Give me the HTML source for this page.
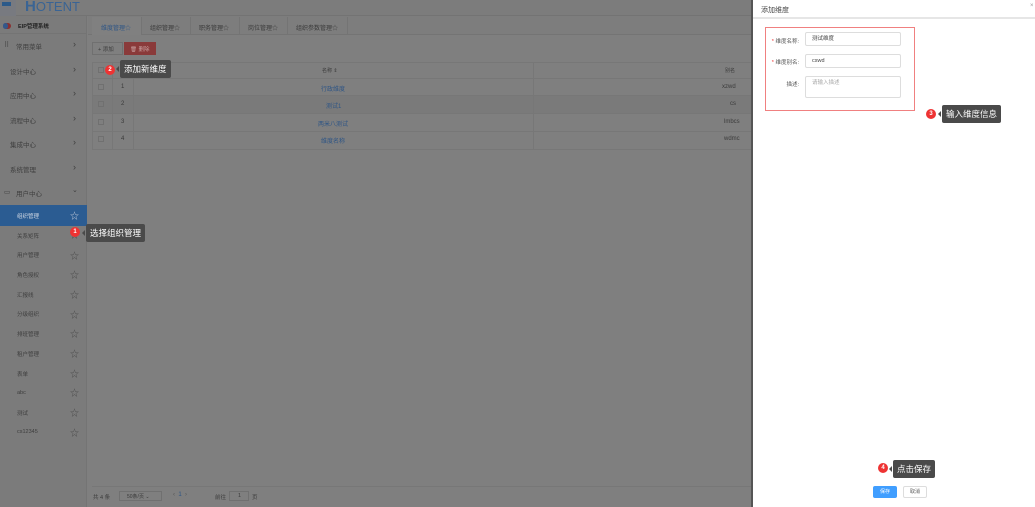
<!DOCTYPE html>
<html><head><meta charset="utf-8"><style>
*{margin:0;padding:0;box-sizing:border-box}
body{width:1035px;height:507px;position:relative;overflow:hidden;background:#7f7f7f;font-family:"Liberation Sans","Noto Sans CJK SC",sans-serif;font-size:6px;color:#3a3a3a}
.a{position:absolute}
.t{position:absolute;white-space:nowrap}
.sb{color:#3e3e3e;font-size:6.5px}
.star{position:absolute;left:70px;font-size:9px;color:#4a4a4a}
.tip{position:absolute;background:#4a4a4a;color:#fff;font-size:8.5px;padding:0 4px;border-radius:2px;line-height:18px;height:18px}
.tip:before{content:"";position:absolute;left:-4px;top:6px;border:3px solid transparent;border-right-color:#4a4a4a;border-left:0}
.bd{position:absolute;width:10px;height:10px;border-radius:50%;background:#e33;color:#fff;font-size:6px;text-align:center;line-height:10px;font-weight:bold}
.inp{position:absolute;left:805px;width:96px;height:14px;border:1px solid #ddd;border-radius:2px;font-size:5.5px;padding-left:6px;line-height:12px;color:#444}
.lbl{position:absolute;font-size:5.5px;color:#555;text-align:right;width:32px;left:767px}
</style></head><body>
<div class="a" style="left:0;top:0;width:752px;height:16px;background:#7c7c7c;border-bottom:1px solid #737373"></div>
<div class="a" style="left:0;top:0;width:16px;height:16px;background:#787a80"></div>
<div class="a" style="left:2px;top:2px;width:9px;height:4px;background:#2c5a8a"></div>
<div class="t" style="left:25px;top:-1px;font-size:13px;color:#3a6494;line-height:16px"><b style="font-size:15px">H</b>OTENT</div>
<div class="a" style="left:0;top:16px;width:87px;height:491px;background:#7b7b7b;border-right:1px solid #747474"></div>
<div class="a" style="left:3px;top:23px;width:8px;height:6px;border-radius:3px;background:#8a3030"></div>
<div class="a" style="left:3px;top:23px;width:5px;height:6px;border-radius:3px;background:#34588a"></div>
<div class="t" style="left:18px;top:22px;font-size:5.5px;font-weight:bold;color:#222">EIP管理系统</div>
<div class="a" style="left:0;top:33px;width:87px;border-top:1px solid #747474"></div>
<div class="t sb" style="left:4px;top:41px;font-size:7px">⠿</div>
<div class="t sb" style="left:16px;top:41px">常用菜单</div><div class="t sb" style="left:73px;top:39px;font-size:9px">›</div>
<div class="t sb" style="left:10px;top:66px">设计中心</div><div class="t sb" style="left:73px;top:64px;font-size:9px">›</div>
<div class="t sb" style="left:10px;top:90px">应用中心</div><div class="t sb" style="left:73px;top:88px;font-size:9px">›</div>
<div class="t sb" style="left:10px;top:115px">流程中心</div><div class="t sb" style="left:73px;top:113px;font-size:9px">›</div>
<div class="t sb" style="left:10px;top:139px">集成中心</div><div class="t sb" style="left:73px;top:137px;font-size:9px">›</div>
<div class="t sb" style="left:10px;top:164px">系统管理</div><div class="t sb" style="left:73px;top:162px;font-size:9px">›</div>
<div class="t sb" style="left:4px;top:188px">▭</div><div class="t sb" style="left:16px;top:188px">用户中心</div><div class="t sb" style="left:72px;top:186px;font-size:7px">⌄</div>
<div class="a" style="left:0;top:205px;width:87px;height:21px;background:#2b5c92"></div>
<div class="t" style="left:17px;top:212px;font-size:5.5px;color:#d0d8e4">组织管理</div><div class="star" style="top:209px;color:#c0c8d8">☆</div>
<div class="t sb" style="left:17px;top:232px;font-size:5.5px">关系矩阵</div><div class="star" style="top:228px">☆</div>
<div class="t sb" style="left:17px;top:251px;font-size:5.5px">用户管理</div><div class="star" style="top:249px">☆</div>
<div class="t sb" style="left:17px;top:271px;font-size:5.5px">角色授权</div><div class="star" style="top:268px">☆</div>
<div class="t sb" style="left:17px;top:291px;font-size:5.5px">汇报线</div><div class="star" style="top:288px">☆</div>
<div class="t sb" style="left:17px;top:310px;font-size:5.5px">分级组织</div><div class="star" style="top:308px">☆</div>
<div class="t sb" style="left:17px;top:330px;font-size:5.5px">排班管理</div><div class="star" style="top:327px">☆</div>
<div class="t sb" style="left:17px;top:350px;font-size:5.5px">租户管理</div><div class="star" style="top:347px">☆</div>
<div class="t sb" style="left:17px;top:370px;font-size:5.5px">表单</div><div class="star" style="top:367px">☆</div>
<div class="t sb" style="left:17px;top:390px;font-size:5.5px">abc</div><div class="star" style="top:386px">☆</div>
<div class="t sb" style="left:17px;top:409px;font-size:5.5px">测试</div><div class="star" style="top:406px">☆</div>
<div class="t sb" style="left:17px;top:429px;font-size:5.5px">cs12345</div><div class="star" style="top:426px">☆</div>
<div class="a" style="left:88px;top:16px;width:664px;height:19px;background:#7d7d7d;border-bottom:1px solid #747474"></div>
<div class="a" style="left:92px;top:17px;width:50px;height:18px;background:#808080;border-right:1px solid #747474"></div>
<div class="t" style="left:101px;top:23px;font-size:6px;color:#2e5585">维度管理☆</div>
<div class="a" style="left:142px;top:17px;width:49px;height:18px;border-right:1px solid #747474"></div><div class="t" style="left:150px;top:23px;font-size:6px">组织管理☆</div>
<div class="a" style="left:191px;top:17px;width:49px;height:18px;border-right:1px solid #747474"></div><div class="t" style="left:199px;top:23px;font-size:6px">职务管理☆</div>
<div class="a" style="left:240px;top:17px;width:48px;height:18px;border-right:1px solid #747474"></div><div class="t" style="left:248px;top:23px;font-size:6px">岗位管理☆</div>
<div class="a" style="left:288px;top:17px;width:60px;height:18px;border-right:1px solid #747474"></div><div class="t" style="left:296px;top:23px;font-size:6px">组织参数管理☆</div>
<div class="a" style="left:92px;top:42px;width:31px;height:13px;border:1px solid #707070"></div><div class="t" style="left:98px;top:45px;font-size:5.5px">+ 添加</div>
<div class="a" style="left:124px;top:42px;width:32px;height:13px;background:#8a3a3a"></div><div class="t" style="left:130px;top:45px;font-size:5.5px;color:#c9a0a0">🗑 删除</div>
<div class="a" style="left:92px;top:62px;width:660px;height:88px;border-top:1px solid #777"></div>
<div class="a" style="left:92px;top:78px;width:660px;border-top:1px solid #777"></div>
<div class="a" style="left:92px;top:95px;width:660px;height:18px;background:#7a7a7a;border-top:1px solid #777"></div>
<div class="a" style="left:92px;top:113px;width:660px;border-top:1px solid #777"></div>
<div class="a" style="left:92px;top:131px;width:660px;border-top:1px solid #777"></div>
<div class="a" style="left:92px;top:149px;width:660px;border-top:1px solid #777"></div>
<div class="a" style="left:92px;top:62px;height:87px;border-left:1px solid #777"></div>
<div class="a" style="left:112px;top:62px;height:87px;border-left:1px solid #777"></div>
<div class="a" style="left:133px;top:62px;height:87px;border-left:1px solid #777"></div>
<div class="a" style="left:533px;top:62px;height:87px;border-left:1px solid #777"></div>
<div class="a" style="left:98px;top:67px;width:6px;height:6px;border:1px solid #707070"></div>
<div class="a" style="left:98px;top:84px;width:6px;height:6px;border:1px solid #707070"></div>
<div class="a" style="left:98px;top:101px;width:6px;height:6px;border:1px solid #707070"></div>
<div class="a" style="left:98px;top:119px;width:6px;height:6px;border:1px solid #707070"></div>
<div class="a" style="left:98px;top:136px;width:6px;height:6px;border:1px solid #707070"></div>
<div class="t" style="left:322px;top:67px;font-size:5px">名称 ⇕</div><div class="t" style="left:725px;top:67px;font-size:5px">别名</div>
<div class="t" style="left:121px;top:84px">1</div><div class="t" style="left:321px;top:84px;color:#2e5585">行政维度</div><div class="t" style="left:722px;top:84px">xzwd</div>
<div class="t" style="left:121px;top:101px">2</div><div class="t" style="left:326px;top:101px;color:#2e5585">测试1</div><div class="t" style="left:730px;top:101px">cs</div>
<div class="t" style="left:121px;top:119px">3</div><div class="t" style="left:318px;top:119px;color:#2e5585">两米八测试</div><div class="t" style="left:724px;top:119px">lmbcs</div>
<div class="t" style="left:121px;top:136px">4</div><div class="t" style="left:321px;top:136px;color:#2e5585">维度名称</div><div class="t" style="left:724px;top:136px">wdmc</div>
<div class="a" style="left:92px;top:486px;width:660px;border-top:1px solid #777"></div>
<div class="t" style="left:93px;top:493px;font-size:5.5px">共 4 条</div>
<div class="a" style="left:119px;top:491px;width:43px;height:10px;border:1px solid #707070"></div><div class="t" style="left:127px;top:493px;font-size:5px">50条/页 ⌄</div>
<div class="t" style="left:173px;top:492px;font-size:6px;color:#555">‹ &nbsp;<span style="color:#2e5585">1</span>&nbsp; ›</div>
<div class="t" style="left:215px;top:493px;font-size:5.5px">前往</div>
<div class="a" style="left:229px;top:491px;width:20px;height:10px;border:1px solid #707070"></div><div class="t" style="left:238px;top:493px;font-size:5.5px">1</div>
<div class="t" style="left:252px;top:493px;font-size:5.5px">页</div>
<div class="bd" style="left:70px;top:227px">1</div><div class="tip" style="left:86px;top:224px">选择组织管理</div>
<div class="bd" style="left:105px;top:65px">2</div><div class="tip" style="left:120px;top:60px">添加新维度</div>
<div class="a" style="left:751px;top:0;width:2px;height:507px;background:#555"></div>
<div class="a" style="left:753px;top:0;width:282px;height:507px;background:#fff"></div>
<div class="t" style="left:761px;top:5px;font-size:7px;color:#444">添加维度</div>
<div class="t" style="left:1030px;top:3px;font-size:6px;color:#999">×</div>
<div class="a" style="left:753px;top:17px;width:282px;border-top:2px solid #e6e6e6"></div>
<div class="a" style="left:765px;top:27px;width:150px;height:84px;border:1px solid #f08080"></div>
<div class="lbl" style="top:37px"><span style="color:#e33">* </span>维度名称:</div>
<div class="inp" style="top:32px">测试维度</div>
<div class="lbl" style="top:58px"><span style="color:#e33">* </span>维度别名:</div>
<div class="inp" style="top:54px">cswd</div>
<div class="lbl" style="top:80px">描述:</div>
<div class="inp" style="top:76px;height:22px;color:#aaa">请输入描述</div>
<div class="bd" style="left:926px;top:109px">3</div><div class="tip" style="left:942px;top:105px">输入维度信息</div>
<div class="bd" style="left:878px;top:463px">4</div><div class="tip" style="left:893px;top:460px">点击保存</div>
<div class="a" style="left:873px;top:486px;width:24px;height:12px;background:#409eff;border-radius:2px;color:#fff;font-size:5px;text-align:center;line-height:12px">保存</div>
<div class="a" style="left:903px;top:486px;width:24px;height:12px;border:1px solid #ddd;border-radius:2px;color:#555;font-size:5px;text-align:center;line-height:10px">取消</div>
</body></html>
